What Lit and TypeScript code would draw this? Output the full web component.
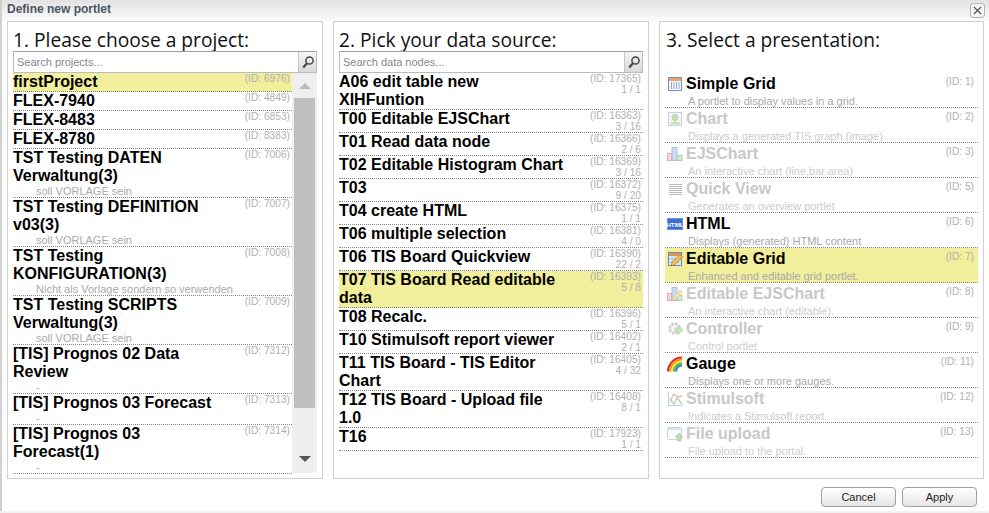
import { LitElement, html, css, svg } from "lit";
import { customElement } from "lit/decorators.js";

type P = { t: string; id: number; sub?: string; sel?: boolean };
type D = { t: string; id: number; n: string; sel?: boolean };
type V = { t: string; d: string; id: number; off?: boolean; sel?: boolean; icon: string };

const projects: P[] = [
  { t: "firstProject", id: 6976, sel: true },
  { t: "FLEX-7940", id: 4849 },
  { t: "FLEX-8483", id: 6853 },
  { t: "FLEX-8780", id: 8383 },
  { t: "TST Testing DATEN Verwaltung(3)", id: 7006, sub: "soll VORLAGE sein" },
  { t: "TST Testing DEFINITION v03(3)", id: 7007, sub: "soll VORLAGE sein" },
  { t: "TST Testing KONFIGURATION(3)", id: 7008, sub: "Nicht als Vorlage sondern so verwenden" },
  { t: "TST Testing SCRIPTS Verwaltung(3)", id: 7009, sub: "soll VORLAGE sein" },
  { t: "[TIS] Prognos 02 Data Review", id: 7312, sub: "-" },
  { t: "[TIS] Prognos 03 Forecast", id: 7313, sub: "-" },
  { t: "[TIS] Prognos 03 Forecast(1)", id: 7314, sub: "-" },
];

const nodes: D[] = [
  { t: "A06 edit table new XIHFuntion", id: 17365, n: "1 / 1" },
  { t: "T00 Editable EJSChart", id: 16363, n: "3 / 16" },
  { t: "T01 Read data node", id: 16366, n: "2 / 6" },
  { t: "T02 Editable Histogram Chart", id: 16369, n: "3 / 16" },
  { t: "T03", id: 16372, n: "9 / 20" },
  { t: "T04 create HTML", id: 16375, n: "1 / 1" },
  { t: "T06 multiple selection", id: 16381, n: "4 / 0" },
  { t: "T06 TIS Board Quickview", id: 16390, n: "22 / 2" },
  { t: "T07 TIS Board Read editable data", id: 16393, n: "5 / 8", sel: true },
  { t: "T08 Recalc.", id: 16396, n: "5 / 1" },
  { t: "T10 Stimulsoft report viewer", id: 16402, n: "2 / 1" },
  { t: "T11 TIS Board - TIS Editor Chart", id: 16405, n: "4 / 32" },
  { t: "T12 TIS Board - Upload file 1.0", id: 16408, n: "8 / 1" },
  { t: "T16", id: 17923, n: "1 / 1" },
];

const views: V[] = [
  { t: "Simple Grid", d: "A portlet to display values in a grid.", id: 1, icon: "grid" },
  { t: "Chart", d: "Displays a generated TIS graph (image)", id: 2, off: true, icon: "image" },
  { t: "EJSChart", d: "An interactive chart (line,bar,area)", id: 3, off: true, icon: "bars" },
  { t: "Quick View", d: "Generates an overview portlet", id: 5, off: true, icon: "lines" },
  { t: "HTML", d: "Displays (generated) HTML content", id: 6, icon: "html" },
  { t: "Editable Grid", d: "Enhanced and editable grid portlet.", id: 7, sel: true, icon: "edit" },
  { t: "Editable EJSChart", d: "An interactive chart (editable).", id: 8, off: true, icon: "editbars" },
  { t: "Controller", d: "Control portlet", id: 9, off: true, icon: "gear" },
  { t: "Gauge", d: "Displays one or more gauges.", id: 11, icon: "rainbow" },
  { t: "Stimulsoft", d: "Indicates a Stimulsoft report.", id: 12, off: true, icon: "stimul" },
  { t: "File upload", d: "File upload to the portal.", id: 13, off: true, icon: "upload" },
];

const icons: Record<string, unknown> = {
  grid: svg`<rect x="1.5" y="1.5" width="13" height="13" fill="#f4f8fd" stroke="#6f95c8"/><rect x="2" y="2" width="12" height="3" fill="#f0a060"/><path d="M4.5 6v7M7 6v7M9.5 6v7M12 6v7" stroke="#8aa8d4"/>`,
  image: svg`<rect x="1.5" y="1.5" width="13" height="13" fill="#e6eef8" stroke="#7c9cc8"/><circle cx="8" cy="6.5" r="3.4" fill="#7cae4c"/><path d="M3 11h10v2.5H3z" fill="#9ac070"/><path d="M8 9v3" stroke="#6a8c3c"/>`,
  bars: svg`<rect x="0.5" y="7.5" width="4" height="7" fill="#f4a0a0" stroke="#c85050"/><rect x="5" y="1.5" width="5" height="13" fill="#8cb0e8" stroke="#4a74c0"/><rect x="10.5" y="9.5" width="4.5" height="5" fill="#a8d490" stroke="#5c9a48"/>`,
  lines: svg`<path d="M2 3.5h13M2 5.5h13M2 7.5h13M2 9.5h13M2 11.5h13M2 13.5h13" stroke="#666"/>`,
  html: svg`<rect x="0.5" y="2.5" width="15" height="11" fill="#3a6fd0" stroke="#6d93dc"/><text x="8" y="10.6" font-family="Liberation Sans" font-size="6.2" font-weight="700" fill="#fff" text-anchor="middle">HTML</text>`,
  edit: svg`<rect x="1.5" y="1.5" width="13" height="13" fill="#eef3fa" stroke="#5f8cc8"/><rect x="2" y="2" width="12" height="3" fill="#e89048"/><path d="M5 5v9M8 5v9M11 5v9M2 8h12M2 11h12" stroke="#a8c0e0"/><path d="M4 15l1-3.5 8-8 2.5 2.5-8 8z" fill="#f2c14e" stroke="#b87a20" stroke-width=".8"/>`,
  editbars: svg`<rect x="0.5" y="7.5" width="4" height="7" fill="#f4a0a0" stroke="#c85050"/><rect x="5" y="1.5" width="5" height="13" fill="#8cb0e8" stroke="#4a74c0"/><rect x="10.5" y="9.5" width="4.5" height="5" fill="#a8d490" stroke="#5c9a48"/><path d="M5 15l1-3 7-8 2 2-7 8z" fill="#f2c14e" stroke="#b87a20" stroke-width=".8"/>`,
  gear: svg`<circle cx="7.5" cy="7.5" r="5" fill="#c8c8c8" stroke="#999" stroke-width="2.6" stroke-dasharray="2.4 1.5"/><circle cx="7.5" cy="7.5" r="3" fill="#ececec"/><path d="M8 7h3.5V4.5L16 9l-4.5 4.5V11H8z" fill="#86c25c" stroke="#5c9a3c" stroke-width=".6"/>`,
  rainbow: svg`<path d="M0 16A15 15 0 0 1 15 1h1v15z" fill="#fff"/><g fill="none" stroke-width="2"><path d="M1 15.5A14 14 0 0 1 15 1.5" stroke="#e02828"/><path d="M3 15.5A12 12 0 0 1 15 3.5" stroke="#f58a1e"/><path d="M5 15.5A10 10 0 0 1 15 5.5" stroke="#f6e020"/><path d="M7 15.5A8 8 0 0 1 15 7.5" stroke="#4cb848"/><path d="M9 15.5A6 6 0 0 1 15 9.5" stroke="#3a78d8"/></g>`,
  stimul: svg`<path d="M1.5 1v13.5H16" fill="none" stroke="#6f95c8" stroke-width="1.2"/><path d="M3 10l4-7 4 3 4-1" fill="none" stroke="#e06060" stroke-width="1.5"/><path d="M3 8l4 5 3-6 5 6" fill="none" stroke="#60a060" stroke-width="1.5"/>`,
  upload: svg`<rect x="0.5" y="1.5" width="14" height="12" rx="1" fill="#f7f9fd" stroke="#7c9cc8"/><rect x="1" y="2" width="13" height="2" fill="#a8c4e8"/><path d="M12 7l4 4h-2v4h-4v-4H8z" fill="#6cb044" stroke="#4c8c30" stroke-width=".6"/>`,
};

@customElement("app-root")
export class AppRoot extends LitElement {
  static styles = css`
    :host { display: block; width: 989px; height: 513px; font-family: "Liberation Sans", Arial, sans-serif; background: #f1f1f1; overflow: hidden; }
    .win { height: 511px; display: flex; flex-direction: column; border-left: 2px solid #cfcfcf; background: #fff; box-sizing: border-box; }
    .bar { height: 21px; flex: none; display: flex; align-items: center; justify-content: space-between; padding: 0 4px 0 5px; background: linear-gradient(#e2e2e2, #fbfbfb); }
    .bar b { font-size: 12px; color: #4b5663; font-weight: 700; margin-top: -4px; }
    .x { width: 13px; height: 13px; border: 1px solid #b4b4b4; border-radius: 3px; background: #f4f4f4; display: flex; align-items: center; justify-content: center; }
    .cols { display: flex; gap: 10px; padding-left: 5px; padding-right: 5px; }
    .panel { box-sizing: border-box; width: 316px; height: 458px; border: 1px solid #d0d0d0; background: #fff; padding: 0 5px; display: flex; flex-direction: column; }
    .panel.p3 { width: 325px; }
    h2 { margin: 0; padding-top: 3px; box-sizing: border-box; font: 400 19.2px/29px "Open Sans", sans-serif; color: #111; height: 29px; white-space: nowrap; }
    .p3 h2 { padding-left: 1px; }
    .search { box-sizing: border-box; height: 22px; flex: none; display: flex; border: 1px solid #b8bcc4; border-top-color: #9aa0a8; }
    .search span { flex: 1; font-size: 11px; line-height: 20px; color: #808890; padding-left: 3px; }
    .go { width: 17px; border-left: 1px solid #c4c8cc; background: linear-gradient(#f6f6f6, #d8d8d8); display: flex; align-items: center; justify-content: center; }
    .body { display: flex; flex: none; }
    .list { flex: 1; min-width: 0; }
    .row { display: flex; flex-wrap: wrap; justify-content: space-between; border-bottom: 1px dotted #888; }
    .row.sel { background: #f1ee9c; }
    .name { font-size: 16px; line-height: 18px; font-weight: 700; color: #000; width: 215px; }
    .l2 .name { width: 228px; }
    .sub { flex: 0 0 100%; box-sizing: border-box; font-size: 11px; line-height: 12px; height: 12px; color: #aaa; padding-left: 23px; white-space: nowrap; }
    .meta { font-size: 10.2px; line-height: 11px; color: #b0b0b0; text-align: right; padding: 0 2px; white-space: nowrap; }
    .l1 .row { min-height: 18px; }
    .l2 .row { min-height: 22px; }
    .scroll { flex: none; width: 25px; height: 400px; background: #efefef; display: flex; flex-direction: column; align-items: center; }
    .sb-top { height: 25px; display: flex; align-items: center; justify-content: center; flex: none; }
    .sb-bot { height: 25px; display: flex; align-items: center; justify-content: center; flex: none; padding-bottom: 3px; box-sizing: border-box; }
    .thumb { width: 21px; height: 310px; background: #bfbfbf; flex: none; }
    .sb-fill { flex: 1; }
    .up { width: 0; height: 0; border: 6px solid transparent; border-top: 0; border-bottom: 6px solid #bbb; }
    .dn { width: 0; height: 0; border: 6px solid transparent; border-bottom: 0; border-top: 6px solid #555; }
    .gap { height: 22px; flex: none; }
    .view { display: grid; grid-template-columns: 19px 1fr auto; height: 35px; box-sizing: border-box; border-bottom: 1px dotted #888; padding: 1px 0 0 2px; }
    .view.sel { background: #f1ee9c; }
    .view svg { margin-top: 2px; }
    .view .name { line-height: 20px; width: auto; }
    .view.off svg { opacity: .45; }
    .view.off .name { color: #c8c8c8; }
    .idv { font-size: 10.2px; line-height: 11px; color: #b0b0b0; padding: 2px 4px 0 0; }
    .desc { grid-column: 1 / -1; font-size: 11px; line-height: 14px; color: #aaa; padding-left: 21px; }
    .view.off .desc { color: #ccc; }
    .foot { flex: 1; display: flex; justify-content: flex-end; align-items: flex-start; gap: 6px; padding: 8px 12px 0 0; }
    .btn { box-sizing: border-box; width: 75px; height: 20px; border: 1px solid #a0a0a0; border-radius: 4px; background: linear-gradient(#fff, #e6e6e6); font-size: 11px; line-height: 18px; text-align: center; color: #222; }
  `;

  render() {
    const glass = html`<svg width="14" height="14" viewBox="0 0 14 14"><circle cx="8.5" cy="5.5" r="3.6" fill="none" stroke="#444" stroke-width="1.5"/><path d="M6 8.2L2.2 12.4" stroke="#444" stroke-width="2.2"/></svg>`;
    return html`<div class="win">
      <div class="bar"><b>Define new portlet</b><div class="x"><svg width="9" height="9" viewBox="0 0 9 9"><path d="M1 1l7 7M8 1l-7 7" stroke="#555" stroke-width="1.2"/></svg></div></div>
      <div class="cols">
        <section class="panel">
          <h2>1. Please choose a project:</h2>
          <div class="search"><span>Search projects...</span><div class="go">${glass}</div></div>
          <div class="body">
            <div class="list l1">${projects.map((p) => html`<div class="row ${p.sel ? "sel" : ""}"><div class="name">${p.t}</div><div class="meta">(ID: ${p.id})</div>${p.sub ? html`<div class="sub">${p.sub}</div>` : ""}</div>`)}</div>
            <div class="scroll"><div class="sb-top"><i class="up"></i></div><div class="thumb"></div><div class="sb-fill"></div><div class="sb-bot"><i class="dn"></i></div></div>
          </div>
        </section>
        <section class="panel">
          <h2>2. Pick your data source:</h2>
          <div class="search"><span>Search data nodes...</span><div class="go">${glass}</div></div>
          <div class="list l2">${nodes.map((n) => html`<div class="row ${n.sel ? "sel" : ""}"><div class="name">${n.t}</div><div class="meta">(ID: ${n.id})<br />${n.n}</div></div>`)}</div>
        </section>
        <section class="panel p3">
          <h2>3. Select a presentation:</h2>
          <div class="gap"></div>
          <div>${views.map((v) => html`<div class="view ${v.off ? "off" : ""} ${v.sel ? "sel" : ""}"><svg width="16" height="16" viewBox="0 0 16 16">${icons[v.icon]}</svg><div class="name">${v.t}</div><div class="idv">(ID: ${v.id})</div><div class="desc">${v.d}</div></div>`)}</div>
        </section>
      </div>
      <div class="foot"><div class="btn">Cancel</div><div class="btn">Apply</div></div>
    </div>`;
  }
}
